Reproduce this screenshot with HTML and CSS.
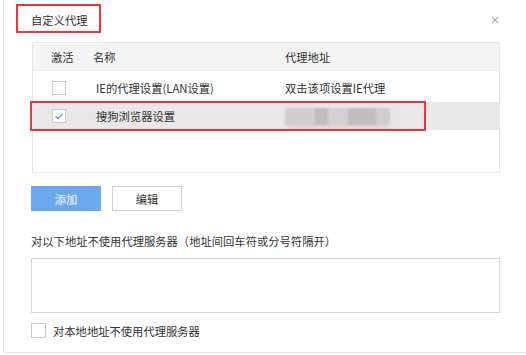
FILE: index.html
```html
<!DOCTYPE html>
<html lang="zh">
<head>
<meta charset="utf-8">
<link rel="stylesheet" href="styles.css">
</head>
<body>
<div class="dialog">
  <div class="head">
    <span class="title">自定义代理</span>
    <span class="mark mark-title"></span>
    <svg class="close" width="8" height="8" viewBox="0 0 8 8"><path d="M1 1L7 7M7 1L1 7" stroke="#b0b0b0" stroke-width="1.1" fill="none"/></svg>
  </div>
  <div class="table">
    <div class="thead">
      <span class="c1">激活</span>
      <span class="c2">名称</span>
      <span class="c3">代理地址</span>
    </div>
    <div class="tbody">
      <div class="row">
        <span class="c1"><span class="box"></span></span>
        <span class="c2 t">IE的代理设置(LAN设置)</span>
        <span class="c3">双击该项设置IE代理</span>
      </div>
      <div class="row sel">
        <span class="c1"><span class="box"><svg width="12" height="12" viewBox="0 0 12 12"><path d="M2.5 6.3L5 8.6L9.6 3.6" stroke="#5b9ae2" stroke-width="1.4" fill="none"/></svg></span></span>
        <span class="c2 t">搜狗浏览器设置</span>
        <span class="c3"><span class="blur"><i class="b1"></i><i class="b2"></i><i class="b3"></i><i class="b4"></i><i class="b5"></i></span></span>
        <span class="mark mark-row"></span>
      </div>
    </div>
  </div>
  <div class="btns">
    <button class="btn primary">添加</button>
    <button class="btn">编辑</button>
  </div>
  <div class="label">对以下地址不使用代理服务器（地址间回车符或分号符隔开）</div>
  <div class="area"></div>
  <div class="check">
    <span class="box"></span>
    <span>对本地地址不使用代理服务器</span>
  </div>
</div>
</body>
</html>
```
FILE: styles.css
```css
html, body {
  margin: 0;
  padding: 0;
  background: #fff;
}
body {
  font-family: "Microsoft YaHei", "Noto Sans CJK SC", "Noto Sans", sans-serif;
  font-size: 11.3px;
  color: #333;
  width: 526px;
  height: 355px;
  overflow: hidden;
}
.dialog {
  position: relative;
  margin-left: 3px;
  width: 540px;
  height: 353px;
  box-sizing: border-box;
  border-left: 1px solid #e6e6e6;
  border-bottom: 1px solid #e6e6e6;
  padding-left: 27px;
}
.head {
  height: 42px;
  line-height: 40px;
  position: relative;
}
.title { color: #333; }
.mark {
  position: absolute;
  border: 2.5px solid #e5383b;
  box-sizing: border-box;
  pointer-events: none;
}
.mark-title {
  left: -15px;
  top: 4px;
  width: 85px;
  height: 29px;
}
.close {
  position: absolute;
  left: 460px;
  top: 16px;
}
.table {
  margin-left: 1px;
  width: 468px;
  height: 131px;
  box-sizing: border-box;
  border: 1px solid #e8e8e8;
}
.thead {
  display: flex;
  height: 27px;
  align-items: center;
  background: #f4f4f4;
  border-bottom: 1px solid #ececec;
}
.thead .c1 { width: 60px; padding-left: 18px; box-sizing: border-box; }
.thead .c2 { width: 192px; }
.c3 { flex: 1; }
.tbody { padding-top: 3px; }
.row {
  position: relative;
  display: flex;
  align-items: center;
  height: 28px;
}
.row .c1 { width: 63px; padding-left: 19px; box-sizing: border-box; display: flex; }
.row .c2 { width: 189px; }
.row.sel { background: #e8e8e8; }
.box {
  display: inline-flex;
  align-items: center;
  justify-content: center;
  width: 14px;
  height: 14px;
  box-sizing: border-box;
  border: 1px solid #c9c9c9;
  background: #fff;
}
.mark-row {
  left: -3px;
  top: -1px;
  width: 396px;
  height: 30px;
}
.blur {
  display: flex;
  height: 17px;
  width: 105px;
  filter: blur(0.8px);
  box-shadow: 0 3px 3px -1px rgba(240, 170, 170, 0.55);
}
.blur i { display: block; height: 100%; }
.b1 { width: 30px; background: #cfcfcf; }
.b2 { width: 13px; background: #bdbdbd; }
.b3 { width: 20px; background: #d2d2d2; }
.b4 { width: 28px; background: #bebebe; }
.b5 { width: 14px; background: #cdcdcd; }
.btns {
  display: flex;
  gap: 11px;
  margin-top: 13px;
}
.btn {
  width: 70px;
  height: 25px;
  box-sizing: border-box;
  border: 1px solid #d3d3d3;
  background: #fff;
  font: inherit;
  color: #333;
  padding: 0;
}
.btn.primary {
  background: #6ca8ee;
  border-color: #6ca8ee;
  color: #fff;
}
.label {
  margin-top: 22px;
  line-height: 16px;
}
.area {
  margin-top: 9px;
  width: 469px;
  height: 55px;
  box-sizing: border-box;
  border: 1px solid #d6d6d6;
}
.check {
  display: flex;
  align-items: center;
  gap: 7px;
  margin-top: 10px;
  height: 15px;
}
.check .box { width: 15px; height: 15px; }
```
